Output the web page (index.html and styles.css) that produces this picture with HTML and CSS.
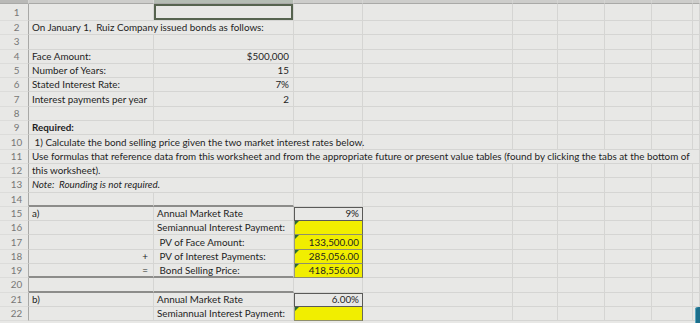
FILE: index.html
```html
<!DOCTYPE html>
<html>
<head>
<meta charset="utf-8">
<link rel="stylesheet" href="styles.css">
</head>
<body>
<div class="sheet">
<table class="grid">
<colgroup>
<col class="c-hdr"><col class="c-a"><col class="c-b"><col class="c-c"><col class="c-d"><col class="c-e"><col class="c-f"><col class="c-g"><col class="c-h"><col class="c-i">
</colgroup>
<tr class="colhead"><th class="corner"></th><th></th><th class="selcol"></th><th></th><th></th><th></th><th></th><th></th><th></th><th></th></tr>
<tr class="r1"><th class="rn">1</th><td></td><td class="sel"></td><td></td><td></td><td></td><td></td><td></td><td></td><td></td></tr>
<tr><th class="rn">2</th><td colspan="2">On January 1,&nbsp; Ruiz Company issued bonds as follows:</td><td></td><td></td><td></td><td></td><td></td><td></td><td></td></tr>
<tr><th class="rn">3</th><td></td><td></td><td></td><td></td><td></td><td></td><td></td><td></td><td></td></tr>
<tr><th class="rn">4</th><td>Face Amount:</td><td class="num">$500,000</td><td></td><td></td><td></td><td></td><td></td><td></td><td></td></tr>
<tr><th class="rn">5</th><td>Number of Years:</td><td class="num">15</td><td></td><td></td><td></td><td></td><td></td><td></td><td></td></tr>
<tr><th class="rn">6</th><td>Stated Interest Rate:</td><td class="num">7%</td><td></td><td></td><td></td><td></td><td></td><td></td><td></td></tr>
<tr><th class="rn">7</th><td>Interest payments per year</td><td class="num">2</td><td></td><td></td><td></td><td></td><td></td><td></td><td></td></tr>
<tr><th class="rn">8</th><td></td><td></td><td></td><td></td><td></td><td></td><td></td><td></td><td></td></tr>
<tr><th class="rn">9</th><td class="bold">Required:</td><td></td><td></td><td></td><td></td><td></td><td></td><td></td><td></td></tr>
<tr><th class="rn">10</th><td colspan="3">&nbsp;1) Calculate the bond selling price given the two market interest rates below.</td><td></td><td></td><td></td><td></td><td></td><td></td></tr>
<tr><th class="rn">11</th><td colspan="9">Use formulas that reference data from this worksheet and from the appropriate future or present value tables (found by clicking the tabs at the bottom of</td></tr>
<tr><th class="rn">12</th><td colspan="2">this worksheet).</td><td></td><td></td><td></td><td></td><td></td><td></td><td></td></tr>
<tr><th class="rn">13</th><td colspan="2" class="ital">Note:&nbsp; Rounding is not required.</td><td></td><td></td><td></td><td></td><td></td><td></td><td></td></tr>
<tr><th class="rn">14</th><td class="bb"></td><td class="bb"></td><td></td><td></td><td></td><td></td><td></td><td></td><td></td></tr>
<tr><th class="rn">15</th><td>a)</td><td>Annual Market Rate</td><td class="num box">9%</td><td></td><td></td><td></td><td></td><td></td><td></td></tr>
<tr><th class="rn">16</th><td></td><td>Semiannual Interest Payment:</td><td class="num yel err"></td><td></td><td></td><td></td><td></td><td></td><td></td></tr>
<tr><th class="rn">17</th><td></td><td>&nbsp;PV of Face Amount:</td><td class="num yel err">133,500.00</td><td></td><td></td><td></td><td></td><td></td><td></td></tr>
<tr><th class="rn">18</th><td class="op">+</td><td>&nbsp;PV of Interest Payments:</td><td class="num yel err">285,056.00</td><td></td><td></td><td></td><td></td><td></td><td></td></tr>
<tr><th class="rn">19</th><td class="op bb">=</td><td class="bb">&nbsp;Bond Selling Price:</td><td class="num yel err">418,556.00</td><td></td><td></td><td></td><td></td><td></td><td></td></tr>
<tr><th class="rn">20</th><td class="bb"></td><td class="bb"></td><td></td><td></td><td></td><td></td><td></td><td></td><td></td></tr>
<tr><th class="rn">21</th><td>b)</td><td>Annual Market Rate</td><td class="num box">6.00%</td><td></td><td></td><td></td><td></td><td></td><td></td></tr>
<tr><th class="rn">22</th><td></td><td>Semiannual Interest Payment:</td><td class="num yel err"></td><td></td><td></td><td></td><td></td><td></td><td></td></tr>
</table>
<div class="fab"></div>
</div>
</body>
</html>
```
FILE: styles.css
```css
html, body {
  margin: 0;
  padding: 0;
  background: #e8e8e6;
}
.sheet {
  position: relative;
  width: 700px;
  height: 323px;
  overflow: hidden;
}
.grid {
  border-collapse: separate;
  border-spacing: 0;
  table-layout: fixed;
  width: 700px;
  font-family: Lato, "Open Sans", sans-serif;
  font-size: 9.85px;
  color: #1e1e1e;
}
.c-hdr { width: 29px; }
.c-a { width: 125px; }
.c-b { width: 140px; }
.c-c { width: 69px; }
.c-d { width: 150px; }
.c-e { width: 45px; }
.c-f { width: 47px; }
.c-g { width: 47px; }
.c-h { width: 41px; }
.c-i { width: 7px; }
.grid tr { height: 14.3px; }
.grid .colhead { height: 4px; }
.grid .r1 { height: 17px; }
.colhead th {
  padding: 0;
  background: #cdcdcb;
  border-bottom: 1px solid #a9a9a7;
}
.colhead .corner { background: #b9b9b7; }
.colhead .selcol { background: #b4bcb3; }
td, th {
  padding: 0 3px;
  white-space: nowrap;
  overflow: visible;
  vertical-align: middle;
  line-height: 11px;
  border-right: 1px solid #d5d5d3;
  border-bottom: 1px solid #d5d5d3;
}
td { position: relative; text-align: left; }
.rn {
  font-weight: normal;
  color: #777775;
  text-align: center;
  padding: 0 0 0 5px;
  border-right: 1px solid #a8a8a6;
  border-bottom-color: #dcdcda;
}
.sel {
  box-shadow: inset 0 0 0 2px #56634f;
}
.num { text-align: right; padding-right: 4px; }
.bold { font-weight: 700; }
.ital { font-style: italic; }
.op { text-align: right; padding-right: 5px; }
.bb { border-bottom: 2px solid #8c8c8a; }
.box {
  border-right-color: #5a5a58;
  border-bottom-color: #5a5a58;
  box-shadow: inset 1px 1px 0 #5a5a58;
  padding-right: 3px;
}
.yel {
  background: #f1ee00;
  border-right-color: #6a6a5a;
  border-bottom-color: #8f8f6a;
  box-shadow: inset 1px 0 0 #9a9a80;
  padding-right: 3px;
}
.err::before {
  content: "";
  position: absolute;
  top: 0;
  left: 1px;
  border-top: 4px solid #2a6a36;
  border-right: 4px solid transparent;
}
.fab {
  position: absolute;
  left: 695px;
  top: 307px;
  width: 12px;
  height: 20px;
  border-radius: 3px;
  background: #1c6f8c;
  box-shadow: inset 1px 0 0 #5aa7bf;
}
```
